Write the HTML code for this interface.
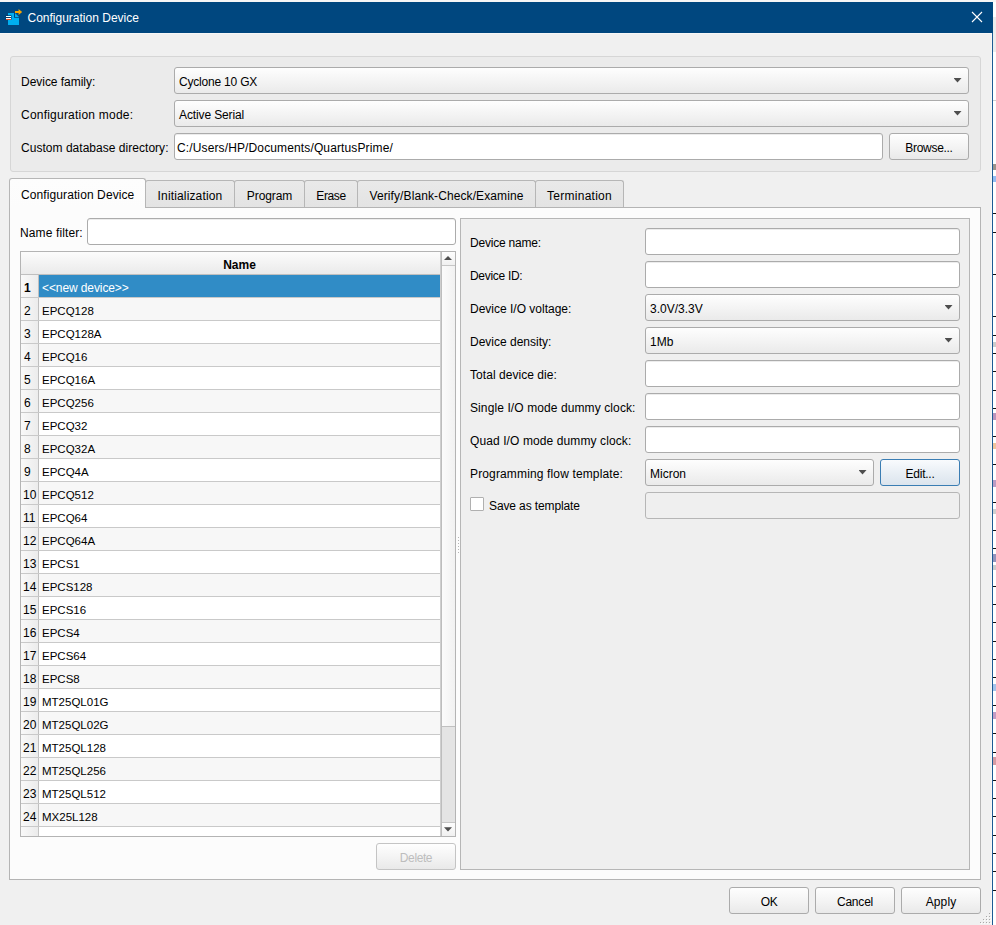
<!DOCTYPE html>
<html><head><meta charset="utf-8"><title>Configuration Device</title>
<style>
html,body{margin:0;padding:0}
body{width:996px;height:925px;position:relative;overflow:hidden;background:#fff;font-family:"Liberation Sans",sans-serif;font-size:12px;color:#000}
*{box-sizing:border-box}
.a{position:absolute}
.t{position:absolute;white-space:pre;line-height:14px;height:14px}
.combo{position:absolute;height:27px;border:1px solid #ababab;border-radius:3px;background:linear-gradient(#fefefe,#f4f4f4 50%,#eaeaea)}
.combo i{position:absolute;right:6.5px;top:10px;width:8px;height:4.5px;background:#4e4e4e;clip-path:polygon(0 0,100% 0,50% 100%)}
.inp{position:absolute;height:27px;border:1px solid #ababab;border-radius:3px;background:#fff;box-shadow:inset 0 1px 0 #ececec}
.btn{position:absolute;height:27px;border:1px solid #ababab;border-radius:3px;background:linear-gradient(#fefefe,#f4f4f4 50%,#e9e9e9);text-align:center;line-height:29px;overflow:hidden}
.tab{position:absolute;top:180px;height:28px;border:1px solid #b6b6b6;border-bottom:none;border-radius:3px 3px 0 0;background:linear-gradient(#e9e9e9,#e3e3e3);text-align:center}
.row{position:absolute;left:21px;width:420px;height:23px;border-bottom:1px solid #c9c9c9}
.row b,.row s{position:absolute;left:0;top:0;width:18px;height:22px;border-right:1px solid #bfbfbf;background:linear-gradient(90deg,#f9f9f9,#ececec);font-weight:normal;text-decoration:none;line-height:26px}
.row b{font-weight:bold}
.row u{position:absolute;left:18px;top:0;width:401px;height:22px;text-decoration:none;line-height:26px;padding-left:3px;white-space:pre;overflow:hidden;font-size:11.5px}
.tick{position:absolute;left:993px;width:3px;height:1px;background:#111}
</style></head><body>

<div class="a" style="left:0;top:0;width:996px;height:2px;background:#f6f6f6"></div>
<div class="a" id="win" style="left:0;top:2px;width:993px;height:923px;background:#f0f0f0;border-right:1px solid #1d5b94"></div>
<div class="a" id="title" style="left:0;top:2px;width:993px;height:31px;background:#00477f"></div>
<div class="a" style="left:0;top:33px;width:992px;height:1px;background:#f7f7f7"></div>
<svg class="a" style="left:5px;top:8px" width="18" height="18" viewBox="5 8 18 18">
<path d="M8 13h6v4h5v8H8z" fill="#00aeef"/><path d="M15 13l4 4h-4z" fill="#00aeef"/>
<rect x="14" y="17" width="5" height="0.7" fill="#003a6a"/>
<rect x="5.5" y="15.3" width="6" height="4.2" fill="#003a6a"/>
<rect x="6" y="16" width="5" height="1" fill="#fff"/><rect x="6" y="18" width="5" height="1" fill="#fff"/><rect x="6" y="19" width="5" height="1" fill="#e8471c"/>
<path d="M15 11h3.6V9l3.6 3-3.6 3v-2H15z" fill="#f7a400"/>
</svg>
<span class="t" style="left:27.5px;top:11px;color:#fff">Configuration Device</span>
<svg class="a" style="left:970px;top:10px" width="14" height="14" viewBox="0 0 14 14"><path d="M2 2l10 10M12 2L2 12" stroke="#fff" stroke-width="1.1" fill="none"/></svg>
<div class="a" style="left:993px;top:17px;width:3px;height:35px;background:#ececec"></div>
<div class="a" style="left:993px;top:100px;width:3px;height:1px;background:#d0d0d0"></div>
<div class="tick" style="top:213px"></div>
<div class="tick" style="top:232px"></div>
<div class="tick" style="top:274px"></div>
<div class="tick" style="top:316px"></div>
<div class="tick" style="top:335px"></div>
<div class="tick" style="top:353px"></div>
<div class="tick" style="top:371px"></div>
<div class="tick" style="top:390px"></div>
<div class="tick" style="top:408px"></div>
<div class="tick" style="top:436px"></div>
<div class="tick" style="top:464px"></div>
<div class="tick" style="top:502px"></div>
<div class="tick" style="top:530px"></div>
<div class="tick" style="top:548px"></div>
<div class="tick" style="top:586px"></div>
<div class="tick" style="top:604px"></div>
<div class="tick" style="top:622px"></div>
<div class="tick" style="top:641px"></div>
<div class="tick" style="top:659px"></div>
<div class="tick" style="top:677px"></div>
<div class="tick" style="top:705px"></div>
<div class="tick" style="top:733px"></div>
<div class="tick" style="top:752px"></div>
<div class="tick" style="top:780px"></div>
<div class="tick" style="top:798px"></div>
<div class="tick" style="top:816px"></div>
<div class="tick" style="top:835px"></div>
<div class="tick" style="top:853px"></div>
<div class="tick" style="top:871px"></div>
<div class="tick" style="top:890px"></div>
<div class="a" style="left:993px;top:164px;width:3px;height:6px;background:#3a2a1a;opacity:.5"></div>
<div class="a" style="left:993px;top:176px;width:3px;height:6px;background:#2a7be8;opacity:.5"></div>
<div class="a" style="left:993px;top:342px;width:3px;height:5px;background:#9a9a9a;opacity:.5"></div>
<div class="a" style="left:993px;top:413px;width:3px;height:7px;background:#7a2a7a;opacity:.5"></div>
<div class="a" style="left:993px;top:443px;width:3px;height:6px;background:#e08a3a;opacity:.5"></div>
<div class="a" style="left:993px;top:480px;width:3px;height:7px;background:#7a3a8a;opacity:.5"></div>
<div class="a" style="left:993px;top:509px;width:3px;height:5px;background:#a0a0a0;opacity:.5"></div>
<div class="a" style="left:993px;top:554px;width:3px;height:8px;background:#2a2a7a;opacity:.5"></div>
<div class="a" style="left:993px;top:565px;width:3px;height:5px;background:#9a9a9a;opacity:.5"></div>
<div class="a" style="left:993px;top:684px;width:3px;height:7px;background:#4a8ad8;opacity:.5"></div>
<div class="a" style="left:993px;top:712px;width:3px;height:7px;background:#8a3a8a;opacity:.5"></div>
<div class="a" style="left:993px;top:757px;width:3px;height:8px;background:#b03a4a;opacity:.5"></div>
<div class="a" style="left:10px;top:56px;width:971px;height:116px;border:1px solid #d6d6d6;border-radius:3px;background:#ebebeb"></div>
<span class="t" style="left:21px;top:75px;letter-spacing:-0.03px">Device family:</span>
<div class="combo" style="left:174px;top:67px;width:795px"><i></i></div>
<span class="t" style="left:179px;top:75px;letter-spacing:-0.2px">Cyclone 10 GX</span>
<span class="t" style="left:21px;top:108px;letter-spacing:0.22px">Configuration mode:</span>
<div class="combo" style="left:174px;top:100px;width:795px"><i></i></div>
<span class="t" style="left:179px;top:108px;letter-spacing:-0.12px">Active Serial</span>
<span class="t" style="left:21px;top:141px;letter-spacing:0.03px">Custom database directory:</span>
<div class="inp" style="left:174px;top:133px;width:709px"></div>
<span class="t" style="left:177px;top:141px;letter-spacing:0.13px">C:/Users/HP/Documents/QuartusPrime/</span>
<div class="btn" style="left:889px;top:133px;width:80px;letter-spacing:-0.3px">Browse...</div>
<div class="a" id="pane" style="left:9px;top:207px;width:972px;height:673px;border:1px solid #b4b4b4;background:#fcfcfc"></div>
<div class="tab" style="left:145px;width:90px"><span class="t" style="left:0;right:0;top:8px;letter-spacing:0.15px">Initialization</span></div>
<div class="tab" style="left:234px;width:71px"><span class="t" style="left:0;right:0;top:8px;letter-spacing:-0.1px">Program</span></div>
<div class="tab" style="left:304px;width:54px"><span class="t" style="left:0;right:0;top:8px;letter-spacing:-0.4px">Erase</span></div>
<div class="tab" style="left:357px;width:179px"><span class="t" style="left:0;right:0;top:8px;letter-spacing:0.1px">Verify/Blank-Check/Examine</span></div>
<div class="tab" style="left:535px;width:89px"><span class="t" style="left:0;right:0;top:8px;letter-spacing:0.27px">Termination</span></div>
<div class="a" style="left:145px;top:207px;width:479px;height:1px;background:#b4b4b4"></div>
<div class="a" style="left:9px;top:178px;width:137px;height:30px;border:1px solid #b6b6b6;border-bottom:none;border-radius:3px 3px 0 0;background:linear-gradient(#fdfdfd,#fcfcfc)"></div>
<span class="t" style="left:21px;top:188px;letter-spacing:0.1px">Configuration Device</span>
<span class="t" style="left:20px;top:226px;letter-spacing:0.12px">Name filter:</span>
<div class="inp" style="left:87px;top:218px;width:369px"></div>
<div class="a" id="tbl" style="left:20px;top:251px;width:436px;height:586px;border:1px solid #b4b4b4;background:#fff"></div>
<div class="a" style="left:21px;top:252px;width:420px;height:23px;border-bottom:1px solid #bfbfbf;background:linear-gradient(#fcfcfc,#f3f3f3 50%,#eaeaea)"></div>
<span class="t" style="left:39px;width:401px;text-align:center;top:258px;font-weight:bold">Name</span>
<div class="row" style="top:275px"><b style="padding-left:3px">1</b><u style="background:#308cc6;color:#fff;font-size:12px;letter-spacing:-0.1px">&lt;&lt;new device&gt;&gt;</u></div>
<div class="row" style="top:298px"><s style="padding-left:3px">2</s><u style="background:#f7f7f7">EPCQ128</u></div>
<div class="row" style="top:321px"><s style="padding-left:3px">3</s><u style="background:#fff">EPCQ128A</u></div>
<div class="row" style="top:344px"><s style="padding-left:3px">4</s><u style="background:#f7f7f7">EPCQ16</u></div>
<div class="row" style="top:367px"><s style="padding-left:3px">5</s><u style="background:#fff">EPCQ16A</u></div>
<div class="row" style="top:390px"><s style="padding-left:3px">6</s><u style="background:#f7f7f7">EPCQ256</u></div>
<div class="row" style="top:413px"><s style="padding-left:3px">7</s><u style="background:#fff">EPCQ32</u></div>
<div class="row" style="top:436px"><s style="padding-left:3px">8</s><u style="background:#f7f7f7">EPCQ32A</u></div>
<div class="row" style="top:459px"><s style="padding-left:3px">9</s><u style="background:#fff">EPCQ4A</u></div>
<div class="row" style="top:482px"><s style="padding-left:2px">10</s><u style="background:#f7f7f7">EPCQ512</u></div>
<div class="row" style="top:505px"><s style="padding-left:2px">11</s><u style="background:#fff">EPCQ64</u></div>
<div class="row" style="top:528px"><s style="padding-left:2px">12</s><u style="background:#f7f7f7">EPCQ64A</u></div>
<div class="row" style="top:551px"><s style="padding-left:2px">13</s><u style="background:#fff">EPCS1</u></div>
<div class="row" style="top:574px"><s style="padding-left:2px">14</s><u style="background:#f7f7f7">EPCS128</u></div>
<div class="row" style="top:597px"><s style="padding-left:2px">15</s><u style="background:#fff">EPCS16</u></div>
<div class="row" style="top:620px"><s style="padding-left:2px">16</s><u style="background:#f7f7f7">EPCS4</u></div>
<div class="row" style="top:643px"><s style="padding-left:2px">17</s><u style="background:#fff">EPCS64</u></div>
<div class="row" style="top:666px"><s style="padding-left:2px">18</s><u style="background:#f7f7f7">EPCS8</u></div>
<div class="row" style="top:689px"><s style="padding-left:2px">19</s><u style="background:#fff">MT25QL01G</u></div>
<div class="row" style="top:712px"><s style="padding-left:2px">20</s><u style="background:#f7f7f7">MT25QL02G</u></div>
<div class="row" style="top:735px"><s style="padding-left:2px">21</s><u style="background:#fff">MT25QL128</u></div>
<div class="row" style="top:758px"><s style="padding-left:2px">22</s><u style="background:#f7f7f7">MT25QL256</u></div>
<div class="row" style="top:781px"><s style="padding-left:2px">23</s><u style="background:#fff">MT25QL512</u></div>
<div class="row" style="top:804px"><s style="padding-left:2px">24</s><u style="background:#f7f7f7">MX25L128</u></div>
<div class="a" style="left:21px;top:827px;width:18px;height:9px;border-right:1px solid #c4c4c4;background:linear-gradient(90deg,#f9f9f9,#ebebeb)"></div>
<div class="a" style="left:440px;top:252px;width:1px;height:584px;background:#cfcfcf"></div>
<div class="a" style="left:441px;top:252px;width:14px;height:584px;border-left:1px solid #bdbdbd;background:linear-gradient(90deg,#fbfbfb,#f1f1f1)"></div>
<div class="a" style="left:442px;top:252px;width:13px;height:14px;border-bottom:1px solid #c6c6c6;background:linear-gradient(#fdfdfd,#f0f0f0)"></div>
<div class="a" style="left:442px;top:822px;width:13px;height:14px;border-top:1px solid #c6c6c6;background:linear-gradient(#fdfdfd,#f0f0f0)"></div>
<div class="a" style="left:442px;top:726px;width:13px;height:96px;border-top:1px solid #c0c0c0;background:#e4e4e4"></div>
<svg class="a" style="left:444px;top:256px" width="8" height="5"><path d="M0 4.1L4 0L8 4.1z" fill="#4e4e4e"/></svg>
<svg class="a" style="left:444px;top:827px" width="8" height="5"><path d="M0 0.3L4 4.4L8 0.3z" fill="#4e4e4e"/></svg>
<div class="a" style="left:458px;top:537px;width:1px;height:1px;background:#b4b4b4"></div>
<div class="a" style="left:458px;top:540px;width:1px;height:1px;background:#b4b4b4"></div>
<div class="a" style="left:458px;top:543px;width:1px;height:1px;background:#b4b4b4"></div>
<div class="a" style="left:458px;top:546px;width:1px;height:1px;background:#b4b4b4"></div>
<div class="a" style="left:458px;top:549px;width:1px;height:1px;background:#b4b4b4"></div>
<div class="a" style="left:458px;top:552px;width:1px;height:1px;background:#b4b4b4"></div>
<div class="btn" style="left:376px;top:843px;width:80px;color:#bdbdbd;border-color:#c4c4c4;letter-spacing:-0.4px">Delete</div>
<div class="a" id="rp" style="left:460px;top:218px;width:510px;height:652px;border:1px solid #b6b6b6;background:#efefef"></div>
<span class="t" style="left:470px;top:236px;letter-spacing:-0.2px">Device name:</span>
<div class="inp" style="left:645px;top:228px;width:315px"></div>
<span class="t" style="left:470px;top:269px;letter-spacing:-0.3px">Device ID:</span>
<div class="inp" style="left:645px;top:261px;width:315px"></div>
<span class="t" style="left:470px;top:302px;letter-spacing:0px">Device I/O voltage:</span>
<div class="combo" style="left:645px;top:294px;width:315px"><i></i></div>
<span class="t" style="left:650px;top:302px">3.0V/3.3V</span>
<span class="t" style="left:470px;top:335px;letter-spacing:0px">Device density:</span>
<div class="combo" style="left:645px;top:327px;width:315px"><i></i></div>
<span class="t" style="left:650px;top:335px">1Mb</span>
<span class="t" style="left:470px;top:368px;letter-spacing:0.05px">Total device die:</span>
<div class="inp" style="left:645px;top:360px;width:315px"></div>
<span class="t" style="left:470px;top:401px;letter-spacing:0.1px">Single I/O mode dummy clock:</span>
<div class="inp" style="left:645px;top:393px;width:315px"></div>
<span class="t" style="left:470px;top:434px;letter-spacing:0.1px">Quad I/O mode dummy clock:</span>
<div class="inp" style="left:645px;top:426px;width:315px"></div>
<span class="t" style="left:470px;top:467px;letter-spacing:0.14px">Programming flow template:</span>
<div class="combo" style="left:645px;top:459px;width:229px"><i></i></div>
<span class="t" style="left:650px;top:467px">Micron</span>
<div class="btn" style="left:880px;top:459px;width:80px;border-color:#3a7db3;background:linear-gradient(#f9fbfd,#e9eff5 50%,#dbe4ed);letter-spacing:-0.25px">Edit...</div>
<div class="a" style="left:470px;top:497px;width:14px;height:14px;border:1px solid #b0b0b0;background:#fff;border-radius:1px"></div>
<span class="t" style="left:489px;top:499px;letter-spacing:-0.12px">Save as template</span>
<div class="a" style="left:645px;top:492px;width:315px;height:27px;border:1px solid #b6b6b6;border-radius:3px;background:#efefef"></div>
<div class="btn" style="left:729px;top:887px;width:80px;letter-spacing:-0.5px">OK</div>
<div class="btn" style="left:815px;top:887px;width:80px;letter-spacing:-0.2px">Cancel</div>
<div class="btn" style="left:901px;top:887px;width:80px;letter-spacing:0.1px">Apply</div>
<div class="a" style="left:989px;top:913px;width:1px;height:1px;background:#a8a8a8;box-shadow:1px 1px 0 #fdfdfd"></div>
<div class="a" style="left:986px;top:916px;width:1px;height:1px;background:#a8a8a8;box-shadow:1px 1px 0 #fdfdfd"></div>
<div class="a" style="left:989px;top:916px;width:1px;height:1px;background:#a8a8a8;box-shadow:1px 1px 0 #fdfdfd"></div>
<div class="a" style="left:983px;top:919px;width:1px;height:1px;background:#a8a8a8;box-shadow:1px 1px 0 #fdfdfd"></div>
<div class="a" style="left:986px;top:919px;width:1px;height:1px;background:#a8a8a8;box-shadow:1px 1px 0 #fdfdfd"></div>
<div class="a" style="left:989px;top:919px;width:1px;height:1px;background:#a8a8a8;box-shadow:1px 1px 0 #fdfdfd"></div>
<div class="a" style="left:980px;top:922px;width:1px;height:1px;background:#a8a8a8;box-shadow:1px 1px 0 #fdfdfd"></div>
<div class="a" style="left:983px;top:922px;width:1px;height:1px;background:#a8a8a8;box-shadow:1px 1px 0 #fdfdfd"></div>
<div class="a" style="left:986px;top:922px;width:1px;height:1px;background:#a8a8a8;box-shadow:1px 1px 0 #fdfdfd"></div>
<div class="a" style="left:989px;top:922px;width:1px;height:1px;background:#a8a8a8;box-shadow:1px 1px 0 #fdfdfd"></div>
<div class="a" style="left:991px;top:33px;width:1px;height:892px;background:#f8f6f4"></div>
</body></html>
